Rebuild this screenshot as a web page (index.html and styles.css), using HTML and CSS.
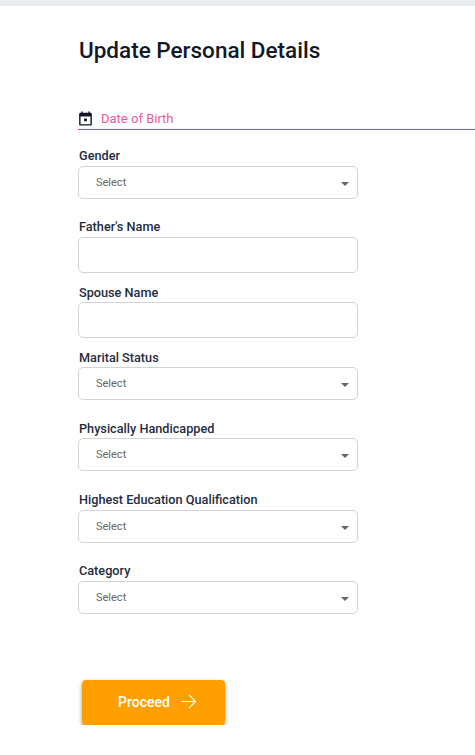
FILE: index.html
```html
<!DOCTYPE html>
<html lang="en">
<head>
    <meta charset="UTF-8">
    <meta name="viewport" content="width=device-width, initial-scale=1.0">
    <title>Update Personal Details</title>
    <link rel="stylesheet" href="styles.css">
</head>
<body>

    <div class="top-strip"></div>

    <div class="container">
        <h1>Update Personal Details</h1>

        <!-- Date of birth -->
        <div class="date-field">
            <svg class="date-icon" viewBox="0 0 24 24" width="17" height="17"><path fill="#111827" d="M19 4h-1V2h-2v2H8V2H6v2H5c-1.100 0-2 .9-2 2v14c0 1.100.9 2 2 2h14c1.100 0 2-.9 2-2V6c0-1.100-.9-2-2-2zm0 16H5V9h14v11zM10 12h4v4h-4z"/></svg>
            <span class="date-label">Date of Birth</span>
        </div>

        <div class="field field-gender">
            <label>Gender</label>
            <div class="select-box"><span>Select</span><i class="caret"></i></div>
        </div>

        <div class="field">
            <label>Father's Name</label>
            <div class="text-box"></div>
        </div>

        <div class="field field-close">
            <label class="label-tight">Spouse Name</label>
            <div class="text-box"></div>
        </div>

        <div class="field field-close">
            <label class="label-tight">Marital Status</label>
            <div class="select-box"><span>Select</span><i class="caret"></i></div>
        </div>

        <div class="field field-far">
            <label class="label-tight">Physically Handicapped</label>
            <div class="select-box"><span>Select</span><i class="caret"></i></div>
        </div>

        <div class="field field-far">
            <label>Highest Education Qualification</label>
            <div class="select-box"><span>Select</span><i class="caret"></i></div>
        </div>

        <div class="field">
            <label>Category</label>
            <div class="select-box"><span>Select</span><i class="caret"></i></div>
        </div>

        <button class="proceed-btn">
            Proceed
            <svg viewBox="0 0 18 16" width="17" height="15"><path fill="none" stroke="#fff" stroke-width="1.2" d="M1 8h15.500M9.500 1l7 7-7 7"/></svg>
        </button>
    </div>

</body>
</html>
```

FILE: styles.css
```css
/* Page */
body {
    font-family: Roboto, "Liberation Sans", sans-serif;
    background-color: #fff;
    margin: 0;
    padding: 0;
    overflow: hidden;
}

.top-strip {
    height: 6px;
    background-color: #e8edf0;
}

.container {
    padding: 31px 0 0 78px;
}

h1 {
    margin: 0;
    padding-left: 1px;
    font-size: 22.5px;
    line-height: 26px;
    font-weight: 500;
    color: #111827;
}

/* Date field */
.date-field {
    display: flex;
    align-items: center;
    box-sizing: border-box;
    height: 27px;
    margin-top: 40px;
    padding-top: 5px;
    border-bottom: 1px solid #d63f9c;
    background: linear-gradient(#fdeef7, #fdeef7) bottom / 100% 1px no-repeat;
}

.date-icon {
    margin-left: -1px;
    margin-right: 7px;
    flex: none;
}

.date-label {
    font-size: 13px;
    color: #ec5a9c;
}

/* Form fields */
.field {
    width: 280px;
    margin-top: 19px;
}

.field-gender {
    margin-top: 17px;
}

.field-close {
    margin-top: 11px;
}

.field-far {
    margin-top: 20px;
}

.field label {
    display: block;
    padding: 1px 0 0 1px;
    font-size: 12.7px;
    line-height: 16px;
    font-weight: 500;
    color: #1f2d40;
    margin-bottom: 2px;
}

.field .label-tight {
    margin-bottom: 1px;
}

.select-box {
    display: flex;
    align-items: center;
    justify-content: space-between;
    box-sizing: border-box;
    height: 33px;
    padding: 0 8px 0 17px;
    border: 1px solid #d1d5db;
    border-radius: 5px;
    font-size: 11px;
    color: #666;
}

.text-box {
    box-sizing: border-box;
    height: 36px;
    border: 1px solid #d1d5db;
    border-radius: 5px;
}

.caret {
    width: 0;
    height: 0;
    border-left: 4px solid transparent;
    border-right: 4px solid transparent;
    border-top: 4px solid #666;
    margin-top: 2px;
}

/* Proceed button */
.proceed-btn {
    display: flex;
    align-items: center;
    justify-content: center;
    gap: 10px;
    box-sizing: border-box;
    width: 143px;
    height: 45px;
    margin: 66px 0 0 4px;
    padding: 0 0 2px 8px;
    background-color: #ffa000;
    color: #fff;
    border: none;
    border-radius: 4px;
    font-family: inherit;
    font-size: 14px;
    font-weight: 500;
    box-shadow: 0 2px 4px rgba(0, 0, 0, 0.4);
}
```
